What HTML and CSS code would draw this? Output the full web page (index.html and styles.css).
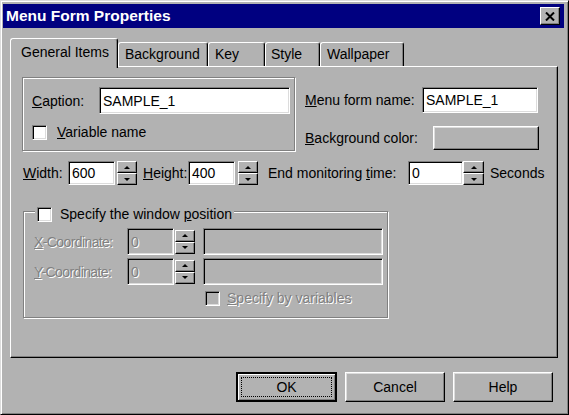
FILE: index.html
```html
<!DOCTYPE html>
<html lang="en">
<head>
<meta charset="UTF-8">
<title>Menu Form Properties</title>
<link rel="stylesheet" href="styles.css">
</head>
<body>
<div class="window">
    <div class="titlebar">
        <span class="title">Menu Form Properties</span>
        <div class="close">
            <svg width="10" height="9" viewBox="0 0 10 9">
                <path d="M1 0.5 L9 8.5 M9 0.5 L1 8.5" stroke="#000" stroke-width="2" fill="none"/>
            </svg>
        </div>
    </div>

    <div class="tabs">
        <div class="tab active">General Items</div>
        <div class="tab tab-bg">Background</div>
        <div class="tab tab-key">Key</div>
        <div class="tab tab-style">Style</div>
        <div class="tab tab-wall">Wallpaper</div>
    </div>

    <div class="panel">
        <div class="top-row">
            <div class="group caption-group">
                <div class="line">
                    <label class="lbl lbl-caption"><u>C</u>aption:</label>
                    <div class="field field-caption">SAMPLE_1</div>
                </div>
                <div class="check-line">
                    <span class="checkbox"></span>
                    <span><u>V</u>ariable name</span>
                </div>
            </div>
            <div class="right-col">
                <div class="line">
                    <label class="lbl lbl-menu"><u>M</u>enu form name:</label>
                    <div class="field field-menu">SAMPLE_1</div>
                </div>
                <div class="line color-line">
                    <label class="lbl lbl-color"><u>B</u>ackground color:</label>
                    <div class="raised color-btn"></div>
                </div>
            </div>
        </div>

        <div class="size-row">
            <label class="lbl lbl-width"><u>W</u>idth:</label>
            <div class="field small-field">600</div>
            <div class="spin spin-w"><span class="up"></span><span class="down"></span></div>
            <label class="lbl lbl-height"><u>H</u>eight:</label>
            <div class="field small-field">400</div>
            <div class="spin spin-h"><span class="up"></span><span class="down"></span></div>
            <label class="lbl lbl-end">End monitoring <u>t</u>ime:</label>
            <div class="field time-field">0</div>
            <div class="spin spin-t"><span class="up"></span><span class="down"></span></div>
            <span class="unit">Seconds</span>
        </div>

        <div class="group position-group">
            <div class="legend">
                <span class="checkbox"></span>
                <span>Specify the window <u>p</u>osition</span>
            </div>
            <div class="coord-line">
                <label class="lbl lbl-coord disabled"><u>X</u>-Coordinate:</label>
                <div class="field off-field">0</div>
                <div class="spin spin-off"><span class="up"></span><span class="down"></span></div>
                <div class="field wide-field"></div>
            </div>
            <div class="coord-line">
                <label class="lbl lbl-coord disabled"><u>Y</u>-Coordinate:</label>
                <div class="field off-field">0</div>
                <div class="spin spin-off"><span class="up"></span><span class="down"></span></div>
                <div class="field wide-field"></div>
            </div>
            <div class="check-line var-line">
                <span class="checkbox off-box"></span>
                <span class="disabled"><u>S</u>pecify by variables</span>
            </div>
        </div>
    </div>

    <div class="actions">
        <div class="raised btn default"><span class="focus">OK</span></div>
        <div class="raised btn">Cancel</div>
        <div class="raised btn">Help</div>
    </div>
</div>
</body>
</html>
```

FILE: styles.css
```css
body {
    margin: 0;
    font-family: "Liberation Sans", Arial, sans-serif;
    font-size: 14px;
    color: #000;
    background: #b2b2b2;
}
.window {
    width: 569px;
    height: 415px;
    box-sizing: border-box;
    background: #b2b2b2;
    border: 1px solid;
    border-color: #dcdcdc #000 #000 #dcdcdc;
    box-shadow: inset 1px 1px #fff, inset -1px -1px #808080;
    padding: 3px 4px 0 2px;
}
.titlebar {
    height: 24px;
    background: #000080;
    display: flex;
    align-items: center;
    justify-content: space-between;
    padding: 0 4px 0 3px;
}
.title {
    color: #fff;
    font-weight: bold;
    font-size: 15.5px;
}
.close {
    width: 20px;
    height: 18px;
    box-sizing: border-box;
    background: #b2b2b2;
    border: 1px solid;
    border-color: #fff #000 #000 #fff;
    box-shadow: inset -1px -1px #808080;
    display: flex;
    align-items: center;
    justify-content: center;
}

/* tabs */
.tabs {
    display: flex;
    align-items: flex-end;
    height: 28px;
    margin: 10px 0 0 7px;
}
.tab {
    height: 24px;
    box-sizing: border-box;
    border: 1px solid;
    border-bottom: none;
    border-color: #fff #000 #000 #fff;
    border-radius: 3px 3px 0 0;
    box-shadow: inset -1px 0 #808080;
    padding: 3px 0 0 6px;
}
.tab.active {
    width: 108px;
    height: 30px;
    margin-bottom: -2px;
    position: relative;
    z-index: 1;
    background: #b2b2b2;
    padding: 5px 0 0 10px;
}
.tab-bg { width: 90px; }
.tab-key { width: 57px; }
.tab-style { width: 55px; padding-left: 5px; }
.tab-wall { width: 84px; }

.panel {
    width: 548px;
    height: 292px;
    box-sizing: border-box;
    margin-left: 7px;
    border: 1px solid;
    border-color: #fff #000 #000 #fff;
    box-shadow: inset -1px -1px #808080;
    padding: 10px 0 0 11px;
}

/* shared controls */
.lbl {
    white-space: nowrap;
}
.field {
    box-sizing: border-box;
    background: #fff;
    border: 1px solid;
    border-color: #808080 #fff #fff #808080;
    box-shadow: inset 1px 1px #000, inset -1px -1px #dcdcdc;
    padding: 0 0 0 3px;
    display: flex;
    align-items: center;
}
.raised {
    box-sizing: border-box;
    background: #b2b2b2;
    border: 1px solid;
    border-color: #fff #000 #000 #fff;
    box-shadow: inset -1px -1px #808080, inset 1px 1px #dcdcdc;
}
.checkbox {
    width: 15px;
    height: 15px;
    box-sizing: border-box;
    background: #fff;
    border: 1px solid;
    border-color: #808080 #fff #fff #808080;
    box-shadow: inset 1px 1px #000, inset -1px -1px #dcdcdc;
}
.off-box {
    background: #b2b2b2;
}
.disabled {
    color: #808080;
    text-shadow: 1px 1px #fff;
}
.group {
    box-sizing: border-box;
    border: 1px solid #808080;
    box-shadow: inset 1px 1px #fff, 1px 1px #fff;
}
.line {
    display: flex;
    align-items: center;
}
.check-line {
    display: flex;
    align-items: center;
    gap: 10px;
}

/* spinner */
.spin {
    width: 20px;
    height: 24px;
    display: flex;
    flex-direction: column;
}
.spin span {
    flex: 1;
    box-sizing: border-box;
    background: #b2b2b2;
    border: 1px solid;
    border-color: #fff #000 #000 #fff;
    box-shadow: inset -1px -1px #808080;
    display: flex;
    align-items: center;
    justify-content: center;
}
.spin span::after {
    content: "";
    border-left: 3px solid transparent;
    border-right: 3px solid transparent;
}
.spin .up::after {
    border-bottom: 3px solid #000;
}
.spin .down::after {
    border-top: 3px solid #000;
}
.spin-off span::after {
    border-bottom-color: #808080;
    border-top-color: #808080;
}

/* first row */
.top-row {
    display: flex;
}
.caption-group {
    width: 273px;
    height: 74px;
    padding: 9px 0 0 9px;
}
.lbl-caption { width: 67px; }
.field-caption {
    width: 191px;
    height: 27px;
}
.caption-group .check-line {
    margin-top: 10px;
}
.right-col {
    margin: 10px 0 0 10px;
}
.lbl-menu { width: 117px; }
.field-menu {
    width: 116px;
    height: 26px;
}
.color-line {
    margin-top: 13px;
}
.lbl-color { width: 128px; }
.color-btn {
    width: 106px;
    height: 24px;
}

/* size row */
.size-row {
    display: flex;
    align-items: center;
    height: 24px;
    margin: 10px 0 0 1px;
}
.lbl-width { width: 45px; }
.small-field {
    width: 47px;
    height: 24px;
}
.spin-w { margin: 0 6px 0 2px; }
.lbl-height { width: 45px; }
.spin-h { margin: 0 10px 0 3px; }
.lbl-end { width: 140px; }
.time-field {
    width: 55px;
    height: 24px;
}
.spin-t { width: 21px; }
.unit { margin-left: 6px; }

/* window position */
.position-group {
    position: relative;
    width: 365px;
    height: 107px;
    margin: 26px 0 0 1px;
    padding: 16px 0 0 10px;
}
.legend {
    position: absolute;
    left: 11px;
    top: -6px;
    display: flex;
    align-items: center;
    gap: 8px;
    padding: 0 2px;
    background: #b2b2b2;
}
.coord-line {
    display: flex;
    align-items: center;
    height: 27px;
    margin-bottom: 3px;
}
.lbl-coord { width: 93px; letter-spacing: -0.6px; }
.off-field {
    width: 47px;
    height: 27px;
    background: #b2b2b2;
    color: #808080;
    text-shadow: 1px 1px #fff;
}
.spin-off { margin: 0 8px 0 1px; }
.wide-field {
    width: 180px;
    height: 27px;
    background: #b2b2b2;
}
.var-line {
    margin: 5px 0 0 171px;
    gap: 7px;
}

/* buttons */
.actions {
    display: flex;
    justify-content: flex-end;
    gap: 8px;
    margin-top: 14px;
    padding-right: 11px;
}
.btn {
    width: 100px;
    height: 30px;
    display: flex;
    align-items: center;
    justify-content: center;
}
.btn.default {
    width: 101px;
    border: 2px solid #000;
    box-shadow: inset 1px 1px #fff, inset -1px -1px #808080;
    padding: 3px;
}
.focus {
    flex: 1;
    align-self: stretch;
    display: flex;
    align-items: center;
    justify-content: center;
    border: 1px dotted #000;
}
```
